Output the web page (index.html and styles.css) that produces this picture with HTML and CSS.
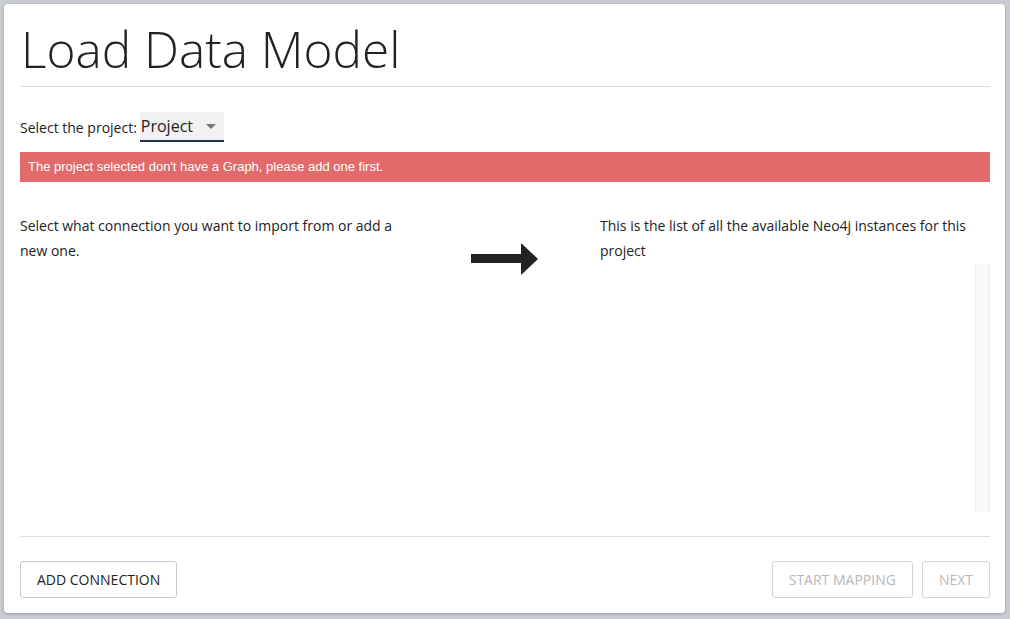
FILE: index.html
```html
<!DOCTYPE html>
<html>

<head>
  <title>Load Data Model</title>
  <link rel="stylesheet" href="styles.css">
</head>

<body>
  <div class="card">
    <h1 class="title">Load Data Model</h1>
    <hr class="divider">
    <div class="project-row">
      <span>Select the project:</span>
      <div class="select">
        <span>Project</span>
        <span class="caret"></span>
      </div>
    </div>
    <div class="alert">The project selected don't have a Graph, please add one first.</div>

    <div class="columns">
      <div class="col">
        <p class="text">Select what connection you want to import from or add a new one.</p>
      </div>
      <div class="col-mid">
        <svg width="67" height="32" viewBox="0 0 67 32">
          <rect x="0" y="11" width="52" height="9" fill="#222" />
          <polygon points="50,0 67,16 50,32" fill="#222" />
        </svg>
      </div>
      <div class="col col-right">
        <p class="text text-right">This is the list of all the available Neo4j instances for this project</p>
        <div class="list">
          <div class="scroll"></div>
        </div>
      </div>
    </div>

    <hr class="divider">
    <div class="actions">
      <button class="btn">ADD CONNECTION</button>
      <div class="spacer"></div>
      <button class="btn" disabled>START MAPPING</button>
      <button class="btn" disabled>NEXT</button>
    </div>
  </div>
</body>

</html>
```

FILE: styles.css
```css
body {
  margin: 0;
  padding: 4px;
  background-color: #c9ccd3;
  font-family: "Open Sans", "Noto Sans", sans-serif;
  color: #222;
}

.card {
  background: white;
  border-radius: 4px;
  box-shadow: 0 1px 3px rgba(0, 0, 0, 0.25);
  padding: 0 15px 15px 16px;
  width: 970px;
  height: 594px;
  display: flex;
  flex-direction: column;
}

.title {
  margin: 0;
  padding-top: 14px;
  padding-left: 1px;
  font-size: 49.5px;
  font-weight: 300;
  line-height: 62px;
  height: 68px;
}

.divider {
  border: 0;
  border-top: 1px solid #dcdcdc;
  margin: 0;
}

.project-row {
  display: flex;
  align-items: center;
  margin-top: 25px;
  font-size: 14px;
}

.select {
  display: flex;
  align-items: center;
  margin-left: 3px;
  padding: 0 8px 0 1px;
  height: 28px;
  width: 75px;
  background: #f1f1f1;
  border-bottom: 2px solid #1b3550;
  font-size: 16px;
}

.select span:first-child {
  flex-grow: 1;
}

.caret {
  width: 0;
  height: 0;
  border-left: 5px solid transparent;
  border-right: 5px solid transparent;
  border-top: 5px solid #777;
}

.alert {
  margin-top: 10px;
  height: 30px;
  line-height: 30px;
  background: #e36a6a;
  color: white;
  padding-left: 8px;
  font-family: "Liberation Sans", Arial, sans-serif;
  font-size: 13px;
}

.columns {
  display: flex;
  flex-grow: 1;
  margin-top: 31px;
}

.col {
  width: 388px;
}

.col-mid {
  width: 192px;
  display: flex;
  justify-content: center;
  align-items: flex-start;
  padding-top: 30px;
}

.col-right {
  flex-grow: 1;
  display: flex;
  flex-direction: column;
  margin-bottom: 24px;
}

.text {
  margin: 0;
  font-size: 14px;
  line-height: 25px;
  width: 380px;
}

.text-right {
  width: 375px;
}

.list {
  flex-grow: 1;
  display: flex;
  justify-content: flex-end;
  margin-top: 1px;
}

.scroll {
  width: 13px;
  background: #f9f9f9;
  border-left: 1px solid #ececec;
  border-right: 1px solid #ececec;
}

.actions {
  display: flex;
  margin-top: 24px;
  gap: 9px;
}

.spacer {
  flex-grow: 1;
}

.btn {
  height: 37px;
  padding: 0 16px;
  background: white;
  border: 1px solid #c8c8c8;
  border-radius: 3px;
  font-family: "Open Sans", "Noto Sans", sans-serif;
  font-size: 14px;
  color: #222;
}

.btn:disabled {
  color: #b8b8b8;
  border-color: #d4d4d4;
}
```
